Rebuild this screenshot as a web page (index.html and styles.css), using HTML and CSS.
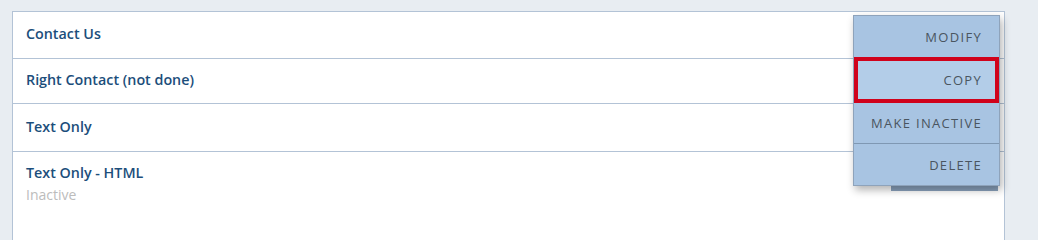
FILE: index.html
```html
<!DOCTYPE html>
<html>
<head>
<meta charset="utf-8">
<link rel="stylesheet" href="styles.css">
</head>
<body>
<div class="page">
  <div class="card">
    <div class="row row-1"><span class="title">Contact Us</span></div>
    <div class="row row-2"><span class="title">Right Contact (not done)</span></div>
    <div class="row row-3"><span class="title">Text Only</span></div>
    <div class="row row-last">
      <div class="info">
        <span class="title">Text Only - HTML</span>
        <span class="status">Inactive</span>
      </div>
      <div class="toggle"></div>
    </div>
    <ul class="menu">
      <li class="item item-modify">MODIFY</li>
      <li class="item item-active">COPY</li>
      <li class="item item-inactive">MAKE INACTIVE</li>
      <li class="item item-sep">DELETE</li>
    </ul>
  </div>
</div>
</body>
</html>
```
FILE: styles.css
```css
html, body {
  margin: 0;
  padding: 0;
  background: #e8edf2;
}
body {
  overflow: hidden;
}
.page {
  padding: 11px 0 0 12px;
}
.card {
  position: relative;
  width: 991px;
  background: #ffffff;
  border: 1px solid #b3c3d6;
  border-bottom: none;
  height: 240px;
}
.row {
  border-bottom: 1px solid #b3c3d6;
  display: flex;
  align-items: center;
  padding: 0 13px 3px;
  box-sizing: border-box;
}
.row-1 { height: 47px; }
.row-2 { height: 45px; }
.row-3 { height: 48px; }
.title {
  font-family: "Open Sans", "Noto Sans", sans-serif;
  font-weight: 600;
  font-size: 14.3px;
  color: #1c4e7b;
}
.row-last {
  border-bottom: none;
  align-items: flex-start;
  padding-top: 11px;
}
.info {
  display: flex;
  flex-direction: column;
  gap: 3px;
}
.status {
  font-family: "Open Sans", "Noto Sans", sans-serif;
  font-size: 14px;
  color: #bcbcbc;
}
.toggle {
  margin-left: auto;
  margin-right: -7px;
  margin-top: 2px;
  width: 107px;
  height: 26px;
  background: #8aa2bd;
}
.menu {
  position: absolute;
  top: 3px;
  left: 840px;
  width: 145px;
  margin: 0;
  padding: 0;
  list-style: none;
  background: #a8c4e2;
  border: 1px solid #8ea3bb;
  box-shadow: 2px 4px 8px rgba(0, 0, 0, 0.3);
}
.item {
  display: flex;
  align-items: center;
  justify-content: flex-end;
  padding-right: 17px;
  font-family: "Open Sans", "Noto Sans", sans-serif;
  font-size: 13px;
  letter-spacing: 1.3px;
  color: #4a5560;
}
.item-modify { height: 41px; }
.item-active {
  height: 38px;
  background: #b3cde8;
  border: 4px solid #d0021b;
  padding-right: 13px;
}
.item-inactive { height: 40px; }
.item-sep {
  height: 41px;
  border-top: 1px solid #7f98b3;
}
```
